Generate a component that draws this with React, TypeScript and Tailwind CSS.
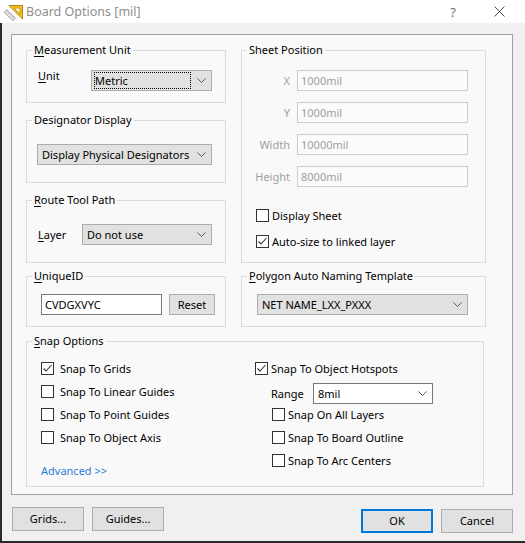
import React from 'react';

type Children = { children?: React.ReactNode };

const Chevron = () => (
    <svg width="9" height="5" viewBox="0 0 9 5" className="shrink-0">
        <path d="M0.5 0.5 L4.5 4.5 L8.5 0.5" fill="none" stroke="#5a5a5a" strokeWidth="1" />
    </svg>
);

const Select = ({ value, className = '', focus = false, white = false }: { value: string; className?: string; focus?: boolean; white?: boolean }) => (
    <div
        className={`flex h-[21px] shrink-0 items-center justify-between border pr-[5px] ${
            white ? 'border-[#7a7a7a] bg-white' : 'border-[#adadad] bg-[#e1e1e1]'
        } ${focus ? 'pl-[2px]' : 'pl-[4px]'} ${className}`}
    >
        {focus ? (
            <span className="mr-[6px] h-[17px] flex-1 border border-dotted border-black leading-[15px] whitespace-nowrap">{value}</span>
        ) : (
            <span className="leading-[16px] whitespace-nowrap">{value}</span>
        )}
        <Chevron />
    </div>
);

const CheckBox = ({ checked = false }: { checked?: boolean }) => (
    <span className="flex h-[13px] w-[13px] shrink-0 items-center justify-center border border-[#333333] bg-white">
        {checked && (
            <svg width="11" height="11" viewBox="0 0 11 11">
                <path d="M1.5 5.5 L4 8 L9.5 2" fill="none" stroke="#333333" strokeWidth="1.1" />
            </svg>
        )}
    </span>
);

const Check = ({ label, checked = false, gap = 'gap-[6px]' }: { label: React.ReactNode; checked?: boolean; gap?: string }) => (
    <div className={`flex h-[13px] items-center ${gap}`}>
        <CheckBox checked={checked} />
        <span className="leading-[16px] whitespace-nowrap">{label}</span>
    </div>
);

const Group = ({ title, className = '', children }: { title: React.ReactNode; className?: string } & Children) => (
    <fieldset className={`min-w-0 border border-[#dcdcdc] ${className}`}>
        <legend className="ml-[5px] px-[2px] leading-[16px]">{title}</legend>
        {children}
    </fieldset>
);

const Btn = ({ label, className = '' }: { label: string; className?: string }) => (
    <button className={`flex h-[24px] w-[72px] items-center justify-center bg-[#e1e1e1] leading-[16px] ${className}`}>{label}</button>
);

const U = ({ children }: Children) => <span className="underline underline-offset-[2px]">{children}</span>;

const BoardIcon = () => (
    <svg width="20" height="20" viewBox="0 0 20 20">
        {/* set square */}
        <path d="M6 3.5 H19.5 V17 Z" fill="#f2c21b" stroke="#b8860b" strokeWidth="1" />
        <path d="M11 6 H17 V12 Z" fill="#fff7d0" stroke="#b8860b" strokeWidth="0.8" />
        {/* ruler */}
        <g transform="rotate(45 7 13)">
            <rect x="1" y="11.5" width="12" height="3.5" fill="#e8e8e8" stroke="#8a8a8a" strokeWidth="0.8" />
            <path d="M3 11.5 V13 M5 11.5 V13.5 M7 11.5 V13 M9 11.5 V13.5 M11 11.5 V13" stroke="#8a8a8a" strokeWidth="0.6" />
        </g>
    </svg>
);

const sheetRows: [string, string][] = [
    ['X', '1000mil'],
    ['Y', '1000mil'],
    ['Width', '10000mil'],
    ['Height', '8000mil'],
];

const BoardOptions = () => {
    return (
        <div className="flex h-[543px] w-[525px] flex-col overflow-hidden font-['Noto_Sans','Noto_Sans_CJK_SC',sans-serif] text-[11px] text-black">
            {/* title bar */}
            <div className="flex h-[23px] shrink-0 items-center bg-white pl-[3px]">
                <BoardIcon />
                <span className="ml-[3px] text-[12.5px] leading-[18px] text-[#8e8e8e]">Board Options [mil]</span>
                <span className="ml-auto text-[13px] leading-[18px] text-[#6e6e6e]">?</span>
                <svg width="11" height="11" viewBox="0 0 11 11" className="ml-[38px] mr-[20px]">
                    <path d="M0.5 0.5 L10.5 10.5 M10.5 0.5 L0.5 10.5" stroke="#4a4a4a" strokeWidth="1" />
                </svg>
            </div>

            <div className="flex flex-1 flex-col border-b-2 border-l-2 border-[#2b2b2b] bg-[#f0f0f0]">
                <div className="ml-[9px] mt-[11px] flex h-[461px] w-[502px] flex-col border border-[#a0a0a0] bg-[#f9f9f9] pl-[14px] pt-[7px]">
                    <div className="flex gap-[15px]">
                        <div className="flex w-[200px] flex-col gap-[9px]">
                            <Group title={<><U>M</U>easurement Unit</>} className="h-[61px]">
                                <div className="mt-[10px] flex items-start pl-[11px]">
                                    <span className="w-[53px] leading-[16px]"><U>U</U>nit</span>
                                    <Select value="Metric" focus className="mt-[2px] w-[121px]" />
                                </div>
                            </Group>
                            <Group title="Designator Display" className="h-[71px]">
                                <Select value="Display Physical Designators" className="ml-[10px] mt-[16px] w-[175px]" />
                            </Group>
                            <Group title={<><U>R</U>oute Tool Path</>} className="h-[71px]">
                                <div className="mt-[16px] flex items-center pl-[11px]">
                                    <span className="w-[44px] leading-[16px]"><U>L</U>ayer</span>
                                    <Select value="Do not use" className="w-[130px]" />
                                </div>
                            </Group>
                        </div>

                        <Group title="Sheet Position" className="h-[221px] w-[245px]">
                            <div className="mt-[12px] flex flex-col gap-[11px] text-[#a0a0a0]">
                                {sheetRows.map(([label, value]) => (
                                    <div key={label} className="flex h-[21px] items-center">
                                        <span className="w-[49px] pr-[1px] text-right leading-[16px]">{label}</span>
                                        <div className="ml-[6px] flex h-[21px] w-[171px] items-center border border-[#cccccc] bg-[#fbfbfb] pl-[3px] leading-[16px]">
                                            {value}
                                        </div>
                                    </div>
                                ))}
                            </div>
                            <div className="ml-[14px] mt-[22px] flex flex-col gap-[13px]">
                                <Check label="Display Sheet" gap="gap-[3px]" />
                                <Check label="Auto-size to linked layer" checked gap="gap-[3px]" />
                            </div>
                        </Group>
                    </div>

                    <div className="mt-[5px] flex gap-[15px]">
                        <Group title={<><U>U</U>niqueID</>} className="h-[59px] w-[200px]">
                            <div className="ml-[14px] mt-[10px] flex gap-[7px]">
                                <div className="flex h-[21px] w-[121px] items-center border border-[#7a7a7a] bg-white pl-[3px] leading-[16px]">CVDGXVYC</div>
                                <button className="flex h-[21px] w-[46px] items-center justify-center border border-[#adadad] bg-[#e1e1e1] leading-[16px]">Reset</button>
                            </div>
                        </Group>
                        <Group title={<><U>P</U>olygon Auto Naming Template</>} className="h-[59px] w-[245px]">
                            <Select value="NET NAME_LXX_PXXX" className="ml-[15px] mt-[10px] w-[211px]" />
                        </Group>
                    </div>

                    <Group title={<><U>S</U>nap Options</>} className="mt-[6px] h-[154px] w-[458px]">
                        <div className="mt-[13px] flex">
                            <div className="flex w-[228px] flex-col pl-[14px]">
                                <div className="flex flex-col gap-[10px]">
                                    <Check label="Snap To Grids" checked />
                                    <Check label="Snap To Linear Guides" />
                                    <Check label="Snap To Point Guides" />
                                    <Check label="Snap To Object Axis" />
                                </div>
                                <span className="mt-[19px] leading-[16px] text-[#2f7ad6]">Advanced &gt;&gt;</span>
                            </div>
                            <div className="flex flex-col">
                                <Check label="Snap To Object Hotspots" checked gap="gap-[3px]" />
                                <div className="ml-[16px] mt-[8px] flex items-center">
                                    <span className="w-[42px] leading-[16px]">Range</span>
                                    <Select value="8mil" white className="w-[120px]" />
                                </div>
                                <div className="ml-[17px] mt-[4px] flex flex-col gap-[10px]">
                                    <Check label="Snap On All Layers" gap="gap-[3px]" />
                                    <Check label="Snap To Board Outline" gap="gap-[3px]" />
                                    <Check label="Snap To Arc Centers" gap="gap-[3px]" />
                                </div>
                            </div>
                        </div>
                    </Group>
                </div>

                {/* dialog buttons */}
                <div className="ml-[10px] mr-[12px] mt-[12px] flex items-start">
                    <Btn label="Grids..." className="border border-[#adadad]" />
                    <Btn label="Guides..." className="ml-[8px] border border-[#adadad]" />
                    <Btn label="OK" className="ml-auto mt-[2px] border-2 border-[#0078d7]" />
                    <Btn label="Cancel" className="ml-[8px] mt-[2px] border border-[#adadad]" />
                </div>
            </div>
        </div>
    );
};

export default function App() {
    return <BoardOptions />;
}
